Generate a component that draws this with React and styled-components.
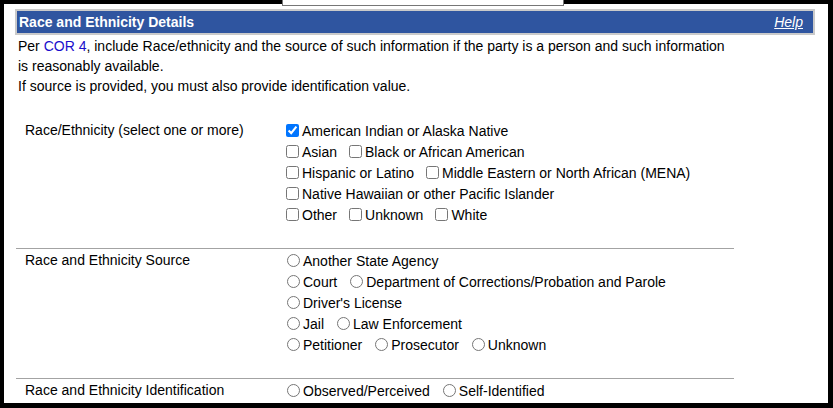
import React from "react";
import styled, { createGlobalStyle } from "styled-components";

const GlobalStyle = createGlobalStyle`
  html, body {
    margin: 0;
    padding: 0;
    background: #000;
  }
  body {
    font-family: "Liberation Sans", Arial, sans-serif;
    font-size: 14px;
    color: #000;
  }
`;

const races = [
  [{ label: "American Indian or Alaska Native", checked: true }],
  [{ label: "Asian" }, { label: "Black or African American" }],
  [{ label: "Hispanic or Latino" }, { label: "Middle Eastern or North African (MENA)" }],
  [{ label: "Native Hawaiian or other Pacific Islander" }],
  [{ label: "Other" }, { label: "Unknown" }, { label: "White" }],
];

const sources = [
  ["Another State Agency"],
  ["Court", "Department of Corrections/Probation and Parole"],
  ["Driver's License"],
  ["Jail", "Law Enforcement"],
  ["Petitioner", "Prosecutor", "Unknown"],
];

const identifications = [["Observed/Perceived", "Self-Identified"]];

function App() {
  return (
    <>
      <GlobalStyle />
      <Frame>
        <Stub />
        <Panel>
          <Section>
            <Header>
              <span>Race and Ethnicity Details</span>
              <HelpLink href="#">Help</HelpLink>
            </Header>
            <Intro>
              Per <CorLink href="#">COR 4</CorLink>, include Race/ethnicity and the source of such
              information if the party is a person and such information
              <br />
              is reasonably available.
              <br />
              If source is provided, you must also provide identification value.
            </Intro>
            <Table>
              <Row first>
                <Label>Race/Ethnicity (select one or more)</Label>
                <Options>
                  {races.map((line, i) => (
                    <OptionLine key={i}>
                      {line.map((opt) => (
                        <Option key={opt.label}>
                          <input type="checkbox" defaultChecked={!!opt.checked} />
                          {opt.label}
                        </Option>
                      ))}
                    </OptionLine>
                  ))}
                </Options>
              </Row>
              <Row>
                <Label>Race and Ethnicity Source</Label>
                <Options>
                  {sources.map((line, i) => (
                    <OptionLine key={i}>
                      {line.map((opt) => (
                        <Option key={opt}>
                          <input type="radio" name="source" />
                          {opt}
                        </Option>
                      ))}
                    </OptionLine>
                  ))}
                </Options>
              </Row>
              <Row>
                <Label>Race and Ethnicity Identification</Label>
                <Options>
                  {identifications.map((line, i) => (
                    <OptionLine key={i}>
                      {line.map((opt) => (
                        <Option key={opt}>
                          <input type="radio" name="ident" />
                          {opt}
                        </Option>
                      ))}
                    </OptionLine>
                  ))}
                </Options>
              </Row>
            </Table>
          </Section>
        </Panel>
      </Frame>
    </>
  );
}

const Frame = styled.div`
  position: relative;
  box-sizing: border-box;
  width: 833px;
  height: 408px;
  padding: 4px 5px 5px 4px;
`;

const Stub = styled.div`
  position: absolute;
  top: 0;
  left: 282px;
  width: 280px;
  height: 5px;
  background: #fff;
  border: 1px solid #767676;
  border-top: none;
`;

const Panel = styled.div`
  height: 100%;
  background: #fff;
  overflow: hidden;
`;

const Section = styled.div`
  padding: 5px 0 0 11px;
`;

const Header = styled.div`
  box-sizing: border-box;
  width: 800px;
  height: 26px;
  display: flex;
  align-items: center;
  justify-content: space-between;
  padding: 0 10px 0 2px;
  background: #2f55a0;
  border: 2px solid #cacaca;
  color: #fff;
  font-weight: bold;
  font-size: 14px;
`;

const HelpLink = styled.a`
  color: #fff;
  font-weight: normal;
  font-style: italic;
  text-decoration: underline;
`;

const Intro = styled.p`
  margin: 1px 0 0;
  padding-left: 3px;
  line-height: 20px;
  white-space: nowrap;
`;

const CorLink = styled.a`
  color: #1a0dcc;
  text-decoration: none;
`;

const Table = styled.div`
  width: 718px;
  margin: 22px 0 0 1px;
`;

const Row = styled.div`
  display: flex;
  padding: 1px 0 23px;
  border-top: 1px solid ${(p) => (p.first ? "transparent" : "#a3a3a3")};
`;

const Label = styled.div`
  box-sizing: border-box;
  width: 266px;
  padding-left: 9px;
  line-height: 21px;
`;

const Options = styled.div`
  display: flex;
  flex-direction: column;
`;

const OptionLine = styled.div`
  display: flex;
  align-items: center;
  height: 21px;
`;

const Option = styled.label`
  display: flex;
  align-items: center;
  margin-right: 8px;
  white-space: nowrap;

  input {
    margin-top: 0;
    margin-bottom: 0;
  }
`;

export default App;
